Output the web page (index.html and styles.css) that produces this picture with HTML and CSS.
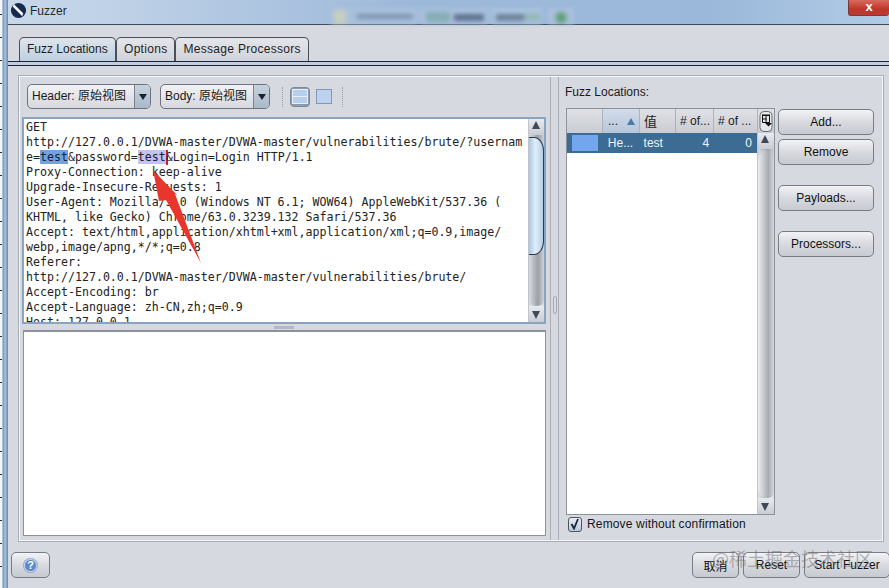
FILE: index.html
```html
<!DOCTYPE html>
<html lang="zh-CN">
<head>
<meta charset="utf-8">
<title>Fuzzer</title>
<link rel="stylesheet" href="styles.css">
</head>
<body>
<div class="desktop-edge"></div>
<div class="window">
  <header class="titlebar">
    <svg class="app-icon" width="17" height="17" viewBox="0 0 18 18"><circle cx="9" cy="9" r="8" fill="#16294f"/><path d="M4 2 L14 12 L13 15 L3 5 Z" fill="#f4f6fa"/></svg>
    <span class="title-text">Fuzzer</span>
    <div class="title-blur">
      <span class="chip chip-a"></span><span class="chip chip-b"></span><span class="chip chip-c"></span><span class="chip chip-d"></span>
    </div>
    <div class="close-btn">x</div>
  </header>
  <div class="content">
    <nav class="tabs">
      <div class="tab tab-active">Fuzz Locations</div>
      <div class="tab tab-wide">Options</div>
      <div class="tab tab-wide">Message Processors</div>
    </nav>
    <div class="tab-rule"></div>
    <main class="panel">
      <section class="left">
        <div class="toolbar">
          <div class="combo combo-header"><span class="combo-text">Header: 原始视图</span><span class="combo-arrow"></span></div>
          <div class="combo combo-body"><span class="combo-text">Body: 原始视图</span><span class="combo-arrow"></span></div>
          <span class="dots"></span>
          <span class="view-btn view-on"><span class="view-ico view-split"></span></span>
          <span class="view-btn"><span class="view-ico"></span></span>
          <span class="dots"></span>
        </div>
        <div class="editor">
          <pre class="code">GET
http://127.0.0.1/DVWA-master/DVWA-master/vulnerabilities/brute/?usernam
e=<span class="hl-a">test</span>&amp;password=<span class="hl-b">test</span><span class="caret"></span>&amp;Login=Login HTTP/1.1
Proxy-Connection: keep-alive
Upgrade-Insecure-Requests: 1
User-Agent: Mozilla/5.0 (Windows NT 6.1; WOW64) AppleWebKit/537.36 (
KHTML, like Gecko) Chrome/63.0.3239.132 Safari/537.36
Accept: text/html,application/xhtml+xml,application/xml;q=0.9,image/
webp,image/apng,*/*;q=0.8
Referer:
http://127.0.0.1/DVWA-master/DVWA-master/vulnerabilities/brute/
Accept-Encoding: br
Accept-Language: zh-CN,zh;q=0.9
Host: 127.0.0.1</pre>
          <div class="vscroll">
            <span class="sb-btn sb-up"></span>
            <span class="sb-track"><span class="sb-thumb"></span></span>
            <span class="sb-btn sb-down"></span>
          </div>
        </div>
        <div class="hsplit"><span class="grip"></span></div>
        <div class="body-box"></div>
      </section>
      <div class="vsplit"><span class="vgrip"></span></div>
      <section class="right">
        <div class="fl-label">Fuzz Locations:</div>
        <div class="fl-main">
          <div class="table-wrap">
            <div class="table-head">
              <div class="th th-0"></div>
              <div class="th th-1 th-sorted">...<span class="sort-up"></span></div>
              <div class="th th-2"><span class="th-cjk">值</span></div>
              <div class="th th-3"># of...</div>
              <div class="th th-4"># of ...</div>
              <div class="th-corner">
                <svg width="14" height="21" viewBox="0 0 14 21"><rect x="1" y="0.5" width="12" height="20" rx="4" fill="#e4e6ea" stroke="#6a6e76"/><path d="M3.5 3.5h7v1.5h-7z" fill="#111"/><path d="M3.5 3.5v8h7v-8M3.5 8h4M7 5v6.5" fill="none" stroke="#111"/><path d="M6 12h7l-3.5 3.5z" fill="#111"/></svg>
              </div>
            </div>
            <div class="table-body">
              <div class="rows">
                <div class="row">
                  <div class="td td-0"><span class="swatch"></span></div>
                  <div class="td td-1">He...</div>
                  <div class="td td-2">test</div>
                  <div class="td td-3">4</div>
                  <div class="td td-4">0</div>
                </div>
              </div>
              <div class="vscroll vscroll-t">
                <span class="sb-btn sb-up"></span>
                <span class="sb-track"><span class="sb-thumb sb-thumb-t"></span></span>
                <span class="sb-btn sb-down"></span>
              </div>
            </div>
          </div>
          <div class="side-btns">
            <div class="btn">Add...</div>
            <div class="btn btn-remove">Remove</div>
            <div class="btn btn-spaced">Payloads...</div>
            <div class="btn btn-spaced">Processors...</div>
          </div>
        </div>
        <label class="check-row"><span class="check"><svg width="12" height="12" viewBox="0 0 12 12"><path d="M2.5 6 L5 10.5 L9 1" fill="none" stroke="#16243c" stroke-width="1.8"/></svg></span>Remove without confirmation</label>
      </section>
    </main>
    <footer class="footer">
      <div class="btn btn-help"><span class="help-ico">?</span></div>
      <div class="foot-right">
        <div class="btn btn-cancel">取消</div>
        <div class="btn btn-reset">Reset</div>
        <div class="btn btn-start">Start Fuzzer</div>
      </div>
    </footer>
  </div>
</div>
<div class="watermark">@稀土掘金技术社区</div>
<svg class="arrow" width="56" height="100" viewBox="0 0 56 100"><polygon points="2,2 26,27 24,26 50,95 15,32 8,33" fill="#e8352e"/></svg>
</body>
</html>
```

FILE: styles.css
```css
* { box-sizing: border-box; }
html, body { margin: 0; padding: 0; }
body {
  width: 889px;
  height: 588px;
  overflow: hidden;
  position: relative;
  display: flex;
  font-family: "Liberation Sans", Arial, sans-serif;
  font-size: 12px;
  color: #111;
  background: #d6d9e0;
}
.desktop-edge {
  width: 8px;
  flex: none;
  background:
    repeating-linear-gradient(180deg, #2a2a2a 0, #2a2a2a 1px, transparent 1px, transparent 23px) 0 14px / 2px 100% no-repeat,
    linear-gradient(90deg, #f4f4f4 0, #f4f4f4 2px, #6f93bd 3px, #a9c3de 5px, #7fa0c4 7px, #6a7f99 8px);
}
.window { width: 881px; flex: none; display: flex; flex-direction: column; }

.titlebar {
  height: 25px;
  flex: none;
  display: flex;
  align-items: center;
  position: relative;
  padding-left: 2px;
  background: linear-gradient(90deg, #c8d8ea 0, #bdd0e6 120px, #9db9da 400px, #9bb8da 700px, #b2cce6 881px);
  border-bottom: 1px solid #3f4a58;
}
.app-icon { margin-top: -3px; }
.title-text { margin-left: 3px; margin-top: -3px; font-size: 12px; color: #202830; }
.title-blur { display: flex; gap: 0; margin-left: 263px; align-self: flex-end; height: 16px; filter: blur(2px); }
.chip { display: block; height: 16px; }
.chip-a { width: 87px; background: linear-gradient(#7f94b2, #7f94b2) 27px 6px / 56px 5px no-repeat, linear-gradient(#c6cfc0, #c6cfc0) 4px 2px / 12px 14px no-repeat, #a9c0dc; }
.chip-b { width: 68px; margin-left: 3px; background: linear-gradient(#5f7390, #5f7390) 34px 6px / 30px 7px no-repeat, linear-gradient(#86aeb6, #86aeb6) 6px 4px / 24px 10px no-repeat, #a9c0dc; }
.chip-c { width: 50px; margin-left: 4px; background: linear-gradient(#6f829c, #6f829c) 4px 6px / 28px 7px no-repeat, linear-gradient(#92b8bc, #92b8bc) 32px 5px / 16px 8px no-repeat, #aac3de; }
.chip-d { width: 26px; margin-left: 6px; background: radial-gradient(circle at 50% 60%, #5f9f78 0, #5f9f78 4px, #a9c0dc 7px); }
.close-btn {
  position: absolute;
  right: 0;
  top: 0;
  width: 41px;
  height: 16px;
  border-radius: 0 0 3px 3px;
  background: linear-gradient(#d86a5e, #c0352a 60%, #b33e34);
  border: 1px solid #7a3b38;
  border-top: 0;
  border-right: 0;
  color: #fff;
  font-weight: bold;
  font-size: 13px;
  line-height: 13px;
  text-align: center;
}

.content { flex: 1; display: flex; flex-direction: column; background: #d6d9e0; min-height: 0; }
.tabs { height: 25px; margin-top: 12px; display: flex; padding-left: 11px; flex: none; }
.tab {
  height: 24px;
  padding: 0 8px;
  line-height: 23px;
  font-size: 12px;
  color: #1c1f26;
  border: 1px solid #4a4f5a;
  border-bottom: 0;
  border-radius: 5px 5px 0 0;
  background: linear-gradient(#e4e6ea, #d0d3da);
}
.tab-wide { letter-spacing: .3px; padding: 0 7px; }
.tab-active { width: 97px; padding: 0 7px; height: 25px; margin-top: 0; background: linear-gradient(#dfe4ea, #bccfe0); }
.tab-rule { height: 5px; flex: none; margin-top: -1px; border-top: 1px solid #1c2440; border-bottom: 1px solid #1c2440; background: #c4cddc; }

.panel {
  margin: 9px 5px 0 10px;
  height: 467px;
  flex: none;
  display: flex;
  border: 1px solid #a9adb6;
  outline: 1px solid #f4f5f7;
  outline-offset: -2px;
}
.left { width: 531px; flex: none; padding: 8px 4px 5px 3px; display: flex; flex-direction: column; }
.toolbar { height: 25px; display: flex; align-items: center; margin-left: 5px; flex: none; }
.combo {
  height: 25px;
  display: flex;
  border: 1px solid #6c7280;
  border-radius: 5px;
  background: linear-gradient(#f1f2f5, #d6d8de);
  overflow: hidden;
}
.combo-header { width: 124px; }
.combo-body { width: 110px; margin-left: 9px; }
.combo-text { flex: 1; padding-left: 4px; line-height: 23px; font-size: 12px; font-family: "Liberation Sans", "Noto Sans CJK SC", sans-serif; color: #1a1a1a; white-space: nowrap; }
.combo-arrow {
  width: 16px;
  flex: none;
  position: relative;
  border-left: 1px solid #7b8290;
  background: linear-gradient(#c6d2de, #a9b9c9);
}
.combo-arrow::after {
  content: "";
  position: absolute;
  left: 4px;
  top: 9px;
  border: 4px solid transparent;
  border-top: 6px solid #1a2230;
  border-bottom: 0;
}
.dots { width: 1px; height: 20px; flex: none; margin: 0 7px 0 12px; border-left: 1px dotted #9a9ea8; }
.dots:last-child { margin: 0 0 0 3px; }
.view-btn { width: 18px; height: 18px; flex: none; display: flex; align-items: center; justify-content: center; border-radius: 4px; margin-right: 6px; }
.view-on { width: 20px; height: 20px; background: #8c9bae; border: 1px solid #7d8898; margin-right: 5px; }
.view-ico { width: 16px; height: 15px; display: block; background: #bcd2ee; border: 1px solid #8197b3; }
.view-on .view-ico { border-color: #e8eef6; background: linear-gradient(#b8cfeb 0, #b8cfeb 6px, #e8eef6 6px, #e8eef6 7px, #b8cfeb 7px); }

.editor {
  margin-top: 8px;
  height: 207px;
  flex: none;
  display: flex;
  border: 2px solid #8aa4bf;
  background: #fff;
  overflow: hidden;
}
.code {
  margin: 0;
  flex: 1;
  padding: 1px 0 0 2px;
  font-family: "DejaVu Sans Mono", monospace;
  font-size: 11.62px;
  line-height: 15px;
  color: #222;
  overflow: hidden;
  white-space: pre;
}
.hl-a { background: #6ea3e6; }
.hl-b { background: #c2c2f4; }
.caret { display: inline-block; width: 2px; height: 15px; vertical-align: top; background: #d02030; margin-right: -2px; }
.vscroll { width: 16px; flex: none; display: flex; flex-direction: column; background: #d9dce2; border-left: 1px solid #c0c4cc; }
.sb-btn { height: 16px; flex: none; position: relative; background: linear-gradient(#e8eaee, #c9ccd3); }
.sb-up::after, .sb-down::after { content: ""; position: absolute; left: 3px; border: 4px solid transparent; }
.sb-up::after { top: 2px; border-bottom: 8px solid #3f4a58; border-top: 0; }
.sb-down::after { top: 5px; border-top: 8px solid #3f4a58; border-bottom: 0; }
.sb-track { flex: 1; display: flex; flex-direction: column; background: linear-gradient(90deg, #d8dade, #9b9ea5 60%, #d0d2d8); border-radius: 0 0 10px 10px / 0 0 8px 8px; position: relative; }
.sb-thumb { display: block; height: 118px; margin-top: 2px; background: linear-gradient(90deg, #a9c7e6, #e2eefa 45%, #b4cfe9); border: 1px solid #2f3b4b; border-left: 0; border-radius: 0 10px 10px 0 / 0 14px 14px 0; }
.vscroll-t { width: 17px; }
.sb-thumb-t { height: 100%; margin-top: 1px; border: 0; border-radius: 10px 10px 10px 10px / 14px 14px 12px 12px; background: linear-gradient(90deg, #ecedf0, #a8abb2 65%, #d8d9de); }
.hsplit { height: 6px; flex: none; display: flex; justify-content: center; align-items: center; }
.grip { width: 20px; height: 3px; background: #b4b8c0; }
.body-box { flex: 1; margin-left: 1px; background: #fff; border: 1px solid #8e9298; border-top-width: 2px; }
.vsplit { width: 9px; flex: none; border-left: 1px solid #a9adb6; border-right: 1px solid #a9adb6; display: flex; align-items: center; justify-content: center; }
.vgrip { width: 4px; height: 18px; border: 1px solid #a6aab2; border-radius: 2px; margin-top: -8px; }

.right { flex: 1; display: flex; flex-direction: column; padding: 8px 0 0 7px; min-width: 0; }
.fl-label { height: 16px; margin-left: -1px; line-height: 16px; font-size: 12px; color: #1a1a1a; }
.fl-main { display: flex; margin-top: 8px; gap: 3px; height: 407px; }
.table-wrap { width: 209px; flex: none; display: flex; flex-direction: column; border: 1px solid #8d9198; background: #fff; }
.table-head { height: 24px; flex: none; display: flex; background: linear-gradient(#dfe1e6, #c9ccd2); }
.th { height: 24px; line-height: 24px; padding: 0 4px; font-size: 12px; color: #1d2026; position: relative; white-space: nowrap; border-right: 1px solid #aeb2ba; }
.th-0 { width: 36px; }
.th-1 { width: 37px; padding-left: 5px; }
.th-sorted { background: linear-gradient(#d2dcea, #b6c6da); }
.sort-up { position: absolute; right: 4px; top: 9px; border: 4px solid transparent; border-bottom: 7px solid #4a7aaa; border-top: 0; }
.th-2 { width: 36px; }
.th-cjk { font-family: "Noto Sans CJK SC", sans-serif; font-size: 13px; }
.th-3 { width: 38px; }
.th-4 { width: 44px; }
.th-corner { flex: 1; display: flex; justify-content: center; align-items: center; }
.table-body { flex: 1; display: flex; min-height: 0; }
.rows { flex: 1; min-width: 0; }
.row { height: 20px; display: flex; background: #3c6c94; color: #f0f4f8; font-size: 12px; line-height: 20px; }
.td { padding: 0 4px; white-space: nowrap; }
.td-0 { width: 36px; padding: 2px 0 2px 5px; }
.swatch { display: block; width: 26px; height: 16px; background: #73a6ec; }
.td-1 { width: 37px; padding-left: 5px; }
.td-2 { width: 36px; }
.td-3 { width: 38px; text-align: right; padding-right: 4px; }
.td-4 { width: 44px; text-align: right; padding-right: 5px; }
.side-btns { display: flex; flex-direction: column; flex: none; padding-top: 1px; }
.btn {
  display: flex;
  align-items: center;
  justify-content: center;
  border: 1px solid #787c84;
  border-radius: 5px;
  background: linear-gradient(#f2f3f5, #d8dae0 50%, #c8cad1);
  font-size: 12px;
  color: #111;
  white-space: nowrap;
}
.side-btns .btn { width: 96px; height: 26px; }
.btn-remove { margin-top: 4px; }
.btn-spaced { margin-top: 20px; }
.check-row { display: flex; align-items: center; height: 18px; padding-left: 2px; font-size: 12px; letter-spacing: .15px; color: #14161a; }
.check { width: 14px; height: 15px; margin-right: 5px; display: flex; align-items: center; justify-content: center; border: 1px solid #4f5660; border-radius: 3px; background: linear-gradient(#e8ecf2, #bcc8d6); }

.footer { flex: 1; display: flex; justify-content: space-between; padding: 10px 0 0 3px; min-height: 0; }
.footer .btn { height: 26px; }
.btn-help { width: 39px; }
.help-ico { width: 15px; height: 15px; border-radius: 50%; background: radial-gradient(circle, #5f88c8 0, #5f88c8 5px, #c3d3ea 6px, #7a9bd0 7.5px); color: #fff; font-weight: bold; font-size: 11px; line-height: 15px; text-align: center; }
.foot-right { display: flex; gap: 4px; margin-right: -1px; }
.btn-cancel { width: 47px; font-family: "Noto Sans CJK SC", sans-serif; }
.btn-reset { width: 57px; }
.btn-start { width: 86px; }
.watermark {
  position: absolute;
  left: 712px;
  top: 548px;
  font-family: "Noto Sans CJK SC", sans-serif;
  font-size: 18px;
  line-height: 20px;
  color: rgba(110, 110, 115, .5);
  white-space: nowrap;
}
.arrow { position: absolute; left: 151px; top: 168px; }
```
